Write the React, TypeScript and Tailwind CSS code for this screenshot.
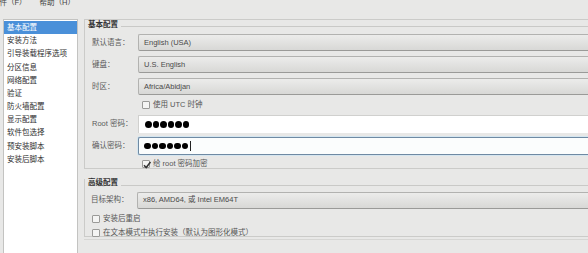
import React from 'react';

const font = { fontFamily: '"Liberation Sans", "Noto Sans CJK SC", sans-serif' };

const navItems = [
    '基本配置',
    '安装方法',
    '引导装载程序选项',
    '分区信息',
    '网络配置',
    '验证',
    '防火墙配置',
    '显示配置',
    '软件包选择',
    '预安装脚本',
    '安装后脚本',
];

function Combo({ value }: { value: string }) {
    return (
        <div className="h-[17px] flex-1 flex items-center pl-[5px] rounded-l-[2px] border border-[#b2b2b0] border-b-[#9a9a98] border-r-0 bg-gradient-to-b from-[#ececeb] to-[#d8d8d6] text-[7.5px] text-[#4a4a4a]">
            {value}
        </div>
    );
}

function Check({ checked, label }: { checked?: boolean; label: string }) {
    return (
        <div className="flex items-center gap-[3px] text-[7.5px] text-[#555]">
            <div className="w-[8px] h-[8px] border border-[#9a9a98] bg-[#f4f4f3] rounded-[1px] relative">
                {checked && (
                    <svg viewBox="0 0 10 10" className="absolute -left-[1px] -top-[1px] w-[10px] h-[10px]">
                        <path d="M2 5.2 L4.2 7.5 L8.5 2" fill="none" stroke="#333" strokeWidth="1.5" />
                    </svg>
                )}
            </div>
            <span>{label}</span>
        </div>
    );
}

function Dots({ cursor }: { cursor?: boolean }) {
    return (
        <div className="flex items-center gap-[1px]">
            {[0, 1, 2, 3, 4, 5].map(i => (
                <div key={i} className="w-[6.5px] h-[6.5px] rounded-full bg-black" />
            ))}
            {cursor && <div className="w-[1px] h-[10px] bg-[#222] ml-[0.5px]" />}
        </div>
    );
}

function FrameHeading({ title }: { title: string }) {
    return (
        <div className="flex items-end h-[8px]">
            <span className="text-[7.5px] font-bold text-[#333] leading-none px-[3px] -mb-[1px]">{title}</span>
            <div className="flex-1 border-b border-[#c9c9c7]" />
        </div>
    );
}

export default function App() {
    return (
        <div className="w-[588px] h-[253px] overflow-hidden bg-[#e8e8e7] flex flex-col" style={font}>
            {/* Menu bar */}
            <div className="h-[20px] flex items-start gap-[13px] -ml-[8px] -mt-[3px] text-[7.5px] text-[#444] shrink-0">
                <span>文件（F）</span>
                <span>帮助（H）</span>
            </div>

            <div className="flex flex-1 min-h-0 pt-[2px]">
                {/* Sidebar */}
                <div className="ml-[3px] w-[75px] bg-white border border-[#c3c3c1] border-b-0 pt-[1px] shrink-0">
                    {navItems.map((item, i) => (
                        <div
                            key={item}
                            className={`h-[13.2px] flex items-center pl-[3px] text-[7.5px] ${i === 0 ? 'bg-[#4a90d9] text-white' : 'text-[#2e2e2e]'}`}
                        >
                            {item}
                        </div>
                    ))}
                </div>

                {/* Right panel */}
                <div className="flex-1 flex flex-col pl-[6px]">
                    {/* Basic config frame */}
                    <div className="border-t border-l border-b border-[#cbcbc9] h-[150px] flex flex-col">
                        <div className="mt-[-1px]">
                            <FrameHeading title="基本配置" />
                        </div>
                        <div className="flex flex-col pl-[7px] mt-[7px]">
                            <div className="flex items-center h-[17px]">
                                <span className="w-[46px] text-[7.5px] text-[#5a5a5a]">默认语言：</span>
                                <Combo value="English (USA)" />
                            </div>
                            <div className="flex items-center h-[17px] mt-[5px]">
                                <span className="w-[46px] text-[7.5px] text-[#5a5a5a]">键盘：</span>
                                <Combo value="U.S. English" />
                            </div>
                            <div className="flex items-center h-[17px] mt-[5px]">
                                <span className="w-[46px] text-[7.5px] text-[#5a5a5a]">时区：</span>
                                <Combo value="Africa/Abidjan" />
                            </div>
                            <div className="flex items-center h-[19px] pl-[50px]">
                                <Check label="使用 UTC 时钟" />
                            </div>
                            <div className="flex items-center h-[18px] mt-[1px]">
                                <span className="w-[46px] text-[7.5px] text-[#5a5a5a]">Root 密码：</span>
                                <div className="flex-1 h-[18px] bg-white border-t border-l border-[#d0d0ce] flex items-center pl-[6px]">
                                    <Dots />
                                </div>
                            </div>
                            <div className="flex items-center h-[18px] mt-[4px]">
                                <span className="w-[46px] text-[7.5px] text-[#5a5a5a]">确认密码：</span>
                                <div className="flex-1 h-[18px] bg-[#fbfdfd] border border-r-0 border-[#6f8aa3] shadow-[0_0_0_1px_#d5e6f0] rounded-l-[2px] flex items-center pl-[5px]">
                                    <Dots cursor />
                                </div>
                            </div>
                            <div className="flex items-center h-[18px] pl-[50px]">
                                <Check checked label="给 root 密码加密" />
                            </div>
                        </div>
                    </div>

                    {/* Advanced config frame */}
                    <div className="mt-[10px] border-l border-b border-[#cbcbc9] h-[58px] flex flex-col">
                        <FrameHeading title="高级配置" />
                        <div className="flex flex-col pl-[6px] mt-[6px]">
                            <div className="flex items-center h-[17px]">
                                <span className="w-[46px] text-[7.5px] text-[#5a5a5a]">目标架构：</span>
                                <Combo value="x86, AMD64, 或 Intel EM64T" />
                            </div>
                            <div className="flex items-center h-[14px] mt-[3px] pl-[1px]">
                                <Check label="安装后重启" />
                            </div>
                            <div className="flex items-center h-[14px] pl-[1px]">
                                <Check label="在文本模式中执行安装（默认为图形化模式）" />
                            </div>
                        </div>
                    </div>
                    <div className="mt-[2px] border-t border-[#d6d6d4] flex-1" />
                </div>
            </div>
        </div>
    );
}
